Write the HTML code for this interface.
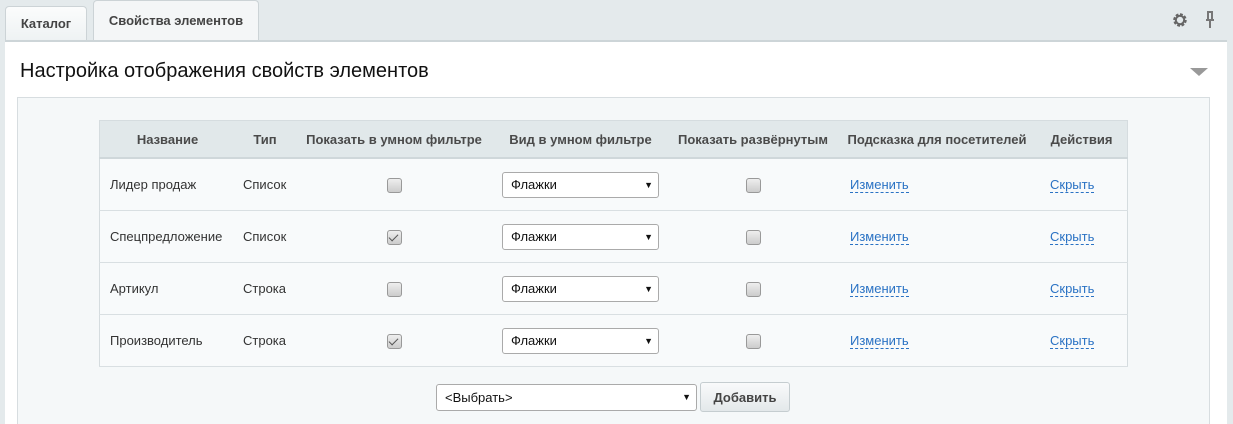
<!DOCTYPE html>
<html><head><meta charset="utf-8"><style>
html,body{margin:0;width:1233px;height:424px;overflow:hidden}
body{background:#e4eaec;font-family:"Liberation Sans",sans-serif;position:relative}
.tab{position:absolute;top:5px;height:34px;border:1px solid #ccd3d6;border-bottom:none;border-radius:4px 4px 0 0;font-size:13px;font-weight:bold;color:#444;line-height:34px;text-align:center;background:linear-gradient(#fbfcfc,#eef2f3)}
.panel{position:absolute;left:5px;top:40px;width:1222px;height:384px;background:#fff;border-top:2px solid #cdd5d8;}
h1{position:absolute;left:20px;top:60px;margin:0;font-weight:normal;font-size:20px;color:#111}
.inner{position:absolute;left:17px;top:97px;width:1191px;height:330px;background:#f5f8f9;border:1px solid #d7dde0}
table{position:absolute;left:99px;top:120px;width:1029px;border-collapse:collapse;font-size:13px;color:#333;background:#f8fafb;border:1px solid #d5dcdf}
th{height:36px;background:#e1e8ea;color:#4a4a4a;font-weight:bold;border-bottom:2px solid #cfd7da;padding:0}
td{height:51px;border-bottom:1px solid #d9dfe2;padding:0}
.cb{display:inline-block;width:13px;height:13px;border:1px solid #999;border-radius:3px;background:linear-gradient(#eee,#ccc);vertical-align:middle;position:relative}
.cb.on::after{content:"";position:absolute;left:3px;top:1px;width:4px;height:8px;border:solid #555;border-width:0 1.5px 1.5px 0;transform:rotate(45deg)}
.sel{display:inline-block;width:157px;height:26px;border:1px solid #aaa;border-radius:3px;background:#fff;box-sizing:border-box;font-size:13px;color:#111;line-height:24px;padding-left:8px;position:relative;text-align:left;vertical-align:middle}
.sel::after{content:"▼";position:absolute;right:5px;top:0;font-size:9px}
a{color:#2a72c4;text-decoration:none;border-bottom:1px dashed #2a72c4}
</style></head><body>
<div class="tab" style="left:5px;width:80px;top:6px">Каталог</div>
<div class="tab" style="left:93px;width:164px;top:0;height:39px;line-height:40px;background:#f4f6f7">Свойства элементов</div>
<svg style="position:absolute;left:1172px;top:12px" width="16" height="16" viewBox="0 0 16 16"><circle cx="8" cy="8" r="5" fill="none" stroke="#666" stroke-width="3.5" stroke-dasharray="2.5 1.4"/><circle cx="8" cy="8" r="4.2" fill="none" stroke="#666" stroke-width="2"/></svg>
<svg style="position:absolute;left:1204px;top:11px" width="12" height="18" viewBox="0 0 12 18"><path d="M3 1h6M4 1v7M8 1v7M2 9h8M6 9v8" stroke="#777" stroke-width="2" fill="none"/></svg>
<div class="panel"></div>
<h1>Настройка отображения свойств элементов</h1>
<svg style="position:absolute;left:1190px;top:68px" width="18" height="9"><path d="M0 0h18L9 8z" fill="#999"/></svg>
<div class="inner"></div>
<table>
<tr><th style="width:135px">Название</th><th style="width:60px">Тип</th><th style="width:198px">Показать в умном фильтре</th><th style="width:175px">Вид в умном фильтре</th><th style="width:170px">Показать развёрнутым</th><th style="width:198px">Подсказка для посетителей</th><th>Действия</th></tr>
<tr><td style="padding-left:10px">Лидер продаж</td><td style="padding-left:8px">Список</td><td align="center"><span class="cb"></span></td><td align="center"><span class="sel">Флажки</span></td><td align="center"><span class="cb"></span></td><td style="padding-left:12px"><a>Изменить</a></td><td style="padding-left:14px"><a>Скрыть</a></td></tr>
<tr><td style="padding-left:10px">Спецпредложение</td><td style="padding-left:8px">Список</td><td align="center"><span class="cb on"></span></td><td align="center"><span class="sel">Флажки</span></td><td align="center"><span class="cb"></span></td><td style="padding-left:12px"><a>Изменить</a></td><td style="padding-left:14px"><a>Скрыть</a></td></tr>
<tr><td style="padding-left:10px">Артикул</td><td style="padding-left:8px">Строка</td><td align="center"><span class="cb"></span></td><td align="center"><span class="sel">Флажки</span></td><td align="center"><span class="cb"></span></td><td style="padding-left:12px"><a>Изменить</a></td><td style="padding-left:14px"><a>Скрыть</a></td></tr>
<tr><td style="padding-left:10px">Производитель</td><td style="padding-left:8px">Строка</td><td align="center"><span class="cb on"></span></td><td align="center"><span class="sel">Флажки</span></td><td align="center"><span class="cb"></span></td><td style="padding-left:12px"><a>Изменить</a></td><td style="padding-left:14px"><a>Скрыть</a></td></tr>
</table>
<span class="sel" style="position:absolute;left:436px;top:384px;width:261px;height:27px;line-height:25px">&lt;Выбрать&gt;</span>
<div style="position:absolute;left:700px;top:382px;width:90px;height:30px;border:1px solid #c5cdd0;border-radius:3px;background:linear-gradient(#f9fafb,#e3e8ea);font-size:13px;font-weight:bold;color:#444;line-height:30px;text-align:center;box-sizing:border-box">Добавить</div>
</body></html>
